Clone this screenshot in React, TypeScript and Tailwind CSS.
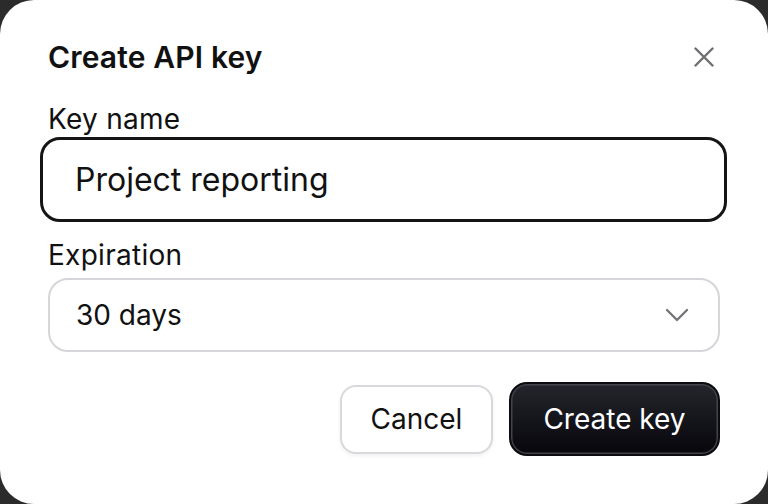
import { ChevronDown } from "lucide-react";

const font = { fontFamily: "Inter, 'Noto Sans', sans-serif" };

export default function App() {
  return (
    <div className="h-[504px] w-[768px] bg-[#2b2b2b]" style={font}>
      <div className="flex h-full w-full flex-col rounded-[34px] bg-white px-12 pt-10">
        <div className="flex h-[34px] items-center justify-between">
          <h1 className="text-[30px] leading-[34px] font-semibold tracking-[0.005em] text-[#111]">
            Create API key
          </h1>
          <button className="flex size-[32px] items-center justify-center text-[#6e6e73]" aria-label="Close">
            <svg width="20" height="20" viewBox="0 0 20 20" fill="none" stroke="currentColor" strokeWidth="2.4" strokeLinecap="round">
              <path d="M1.5 1.5 18.5 18.5M18.5 1.5 1.5 18.5" />
            </svg>
          </button>
        </div>

        <label className="mt-[30px] text-[28px] leading-[30px] tracking-[0.01em] text-[#111]">Key name</label>
        <div className="mt-[3px] -ml-[8px] -mr-[7px] flex h-[85px] items-center rounded-[20px] border-[3px] border-[#151515] pl-[32px]">
          <span className="text-[32px] leading-[40px] text-[#111]">Project reporting</span>
        </div>

        <label className="mt-[18px] text-[28px] leading-[30px] tracking-[0.01em] text-[#111]">Expiration</label>
        <div className="mt-[8px] flex h-[74px] items-center justify-between rounded-[20px] border-2 border-[#d6d6da] pr-[21px] pl-[26px]">
          <span className="text-[28px] leading-[34px] text-[#111]">30 days</span>
          <ChevronDown className="size-[40px] text-[#737378]" strokeWidth={1.4} aria-hidden />
        </div>

        <div className="mt-[30px] flex items-center justify-end gap-4">
          <button className="h-[69px] w-[153px] rounded-[16px] border-2 border-[#d9d9dd] bg-white text-[28px] text-[#111] shadow-[0_2px_4px_rgba(0,0,0,0.06)]">
            Cancel
          </button>
          <button className="h-[74px] w-[211px] rounded-[18px] border-2 border-[#0c0c10] bg-gradient-to-b from-[#25252d] to-[#07070c] text-[28px] text-white shadow-[inset_0_0_0_1.5px_#43434c]">
            Create key
          </button>
        </div>
      </div>
    </div>
  );
}
